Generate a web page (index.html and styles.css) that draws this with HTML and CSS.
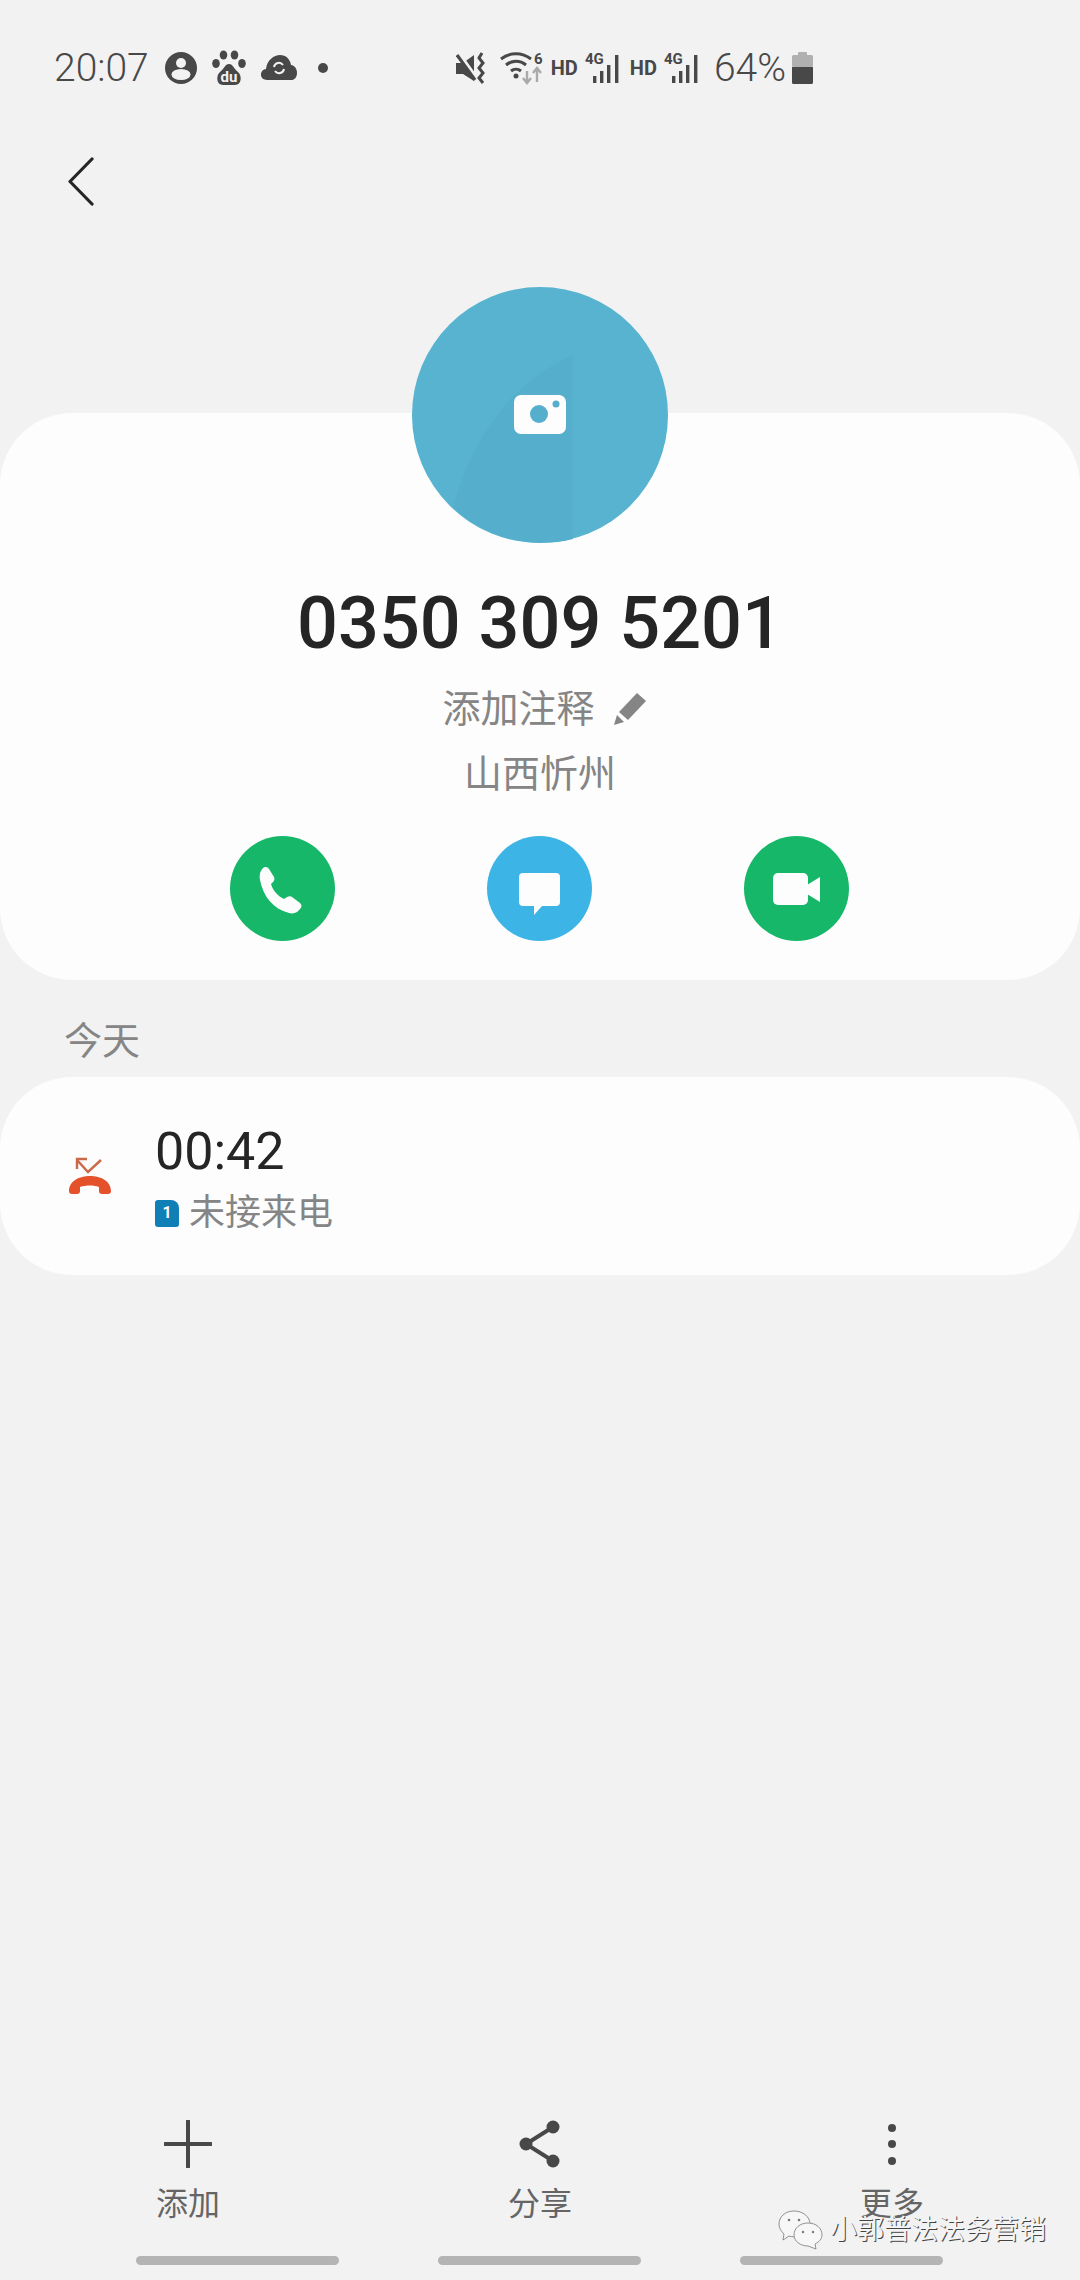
FILE: index.html
```html
<!DOCTYPE html>
<html lang="zh-CN">
<head>
    <meta charset="UTF-8">
    <meta name="viewport" content="width=device-width, initial-scale=1.0">
    <title>0350 309 5201</title>
    <link rel="stylesheet" href="styles.css">
</head>
<body>
    <div class="status-bar">
        <div class="status-left">
            <span class="status-text">20:07</span>
            <svg class="ic-user" width="32" height="32" viewBox="0 0 32 32"><circle cx="16" cy="16" r="16" fill="#484848"/><circle cx="16" cy="11" r="5" fill="#f2f2f2"/><ellipse cx="16" cy="22.500" rx="9.500" ry="5.500" fill="#f2f2f2"/></svg>
            <svg class="ic-baidu" width="36" height="36" viewBox="0 0 36 36"><g fill="#484848"><ellipse cx="11.500" cy="5" rx="3.800" ry="4.600"/><ellipse cx="22.500" cy="5" rx="3.800" ry="4.600"/><ellipse cx="4" cy="13.500" rx="3.800" ry="4.600"/><ellipse cx="30" cy="13.500" rx="3.800" ry="4.600"/><path d="M17 14c4 0 5 5 9 8 4 3 4 13-3 13H11C4 35 4 25 8 22c4-3 5-8 9-8z"/></g><text x="17" y="32" class="baidu-du">du</text></svg>
            <svg class="ic-cloud" width="36" height="26" viewBox="0 0 36 26"><path d="M6 25c-8 0-8-10-1-11C6 5 13 0 19 0c6 0 10 4 11 10 8 1 8 15 0 15z" fill="#484848"/><path d="M13 12a5 5 0 0 1 9-2M23 14a5 5 0 0 1-9 2" fill="none" stroke="#f2f2f2" stroke-width="2"/></svg>
            <span class="status-dot"></span>
        </div>
        <div class="status-right">
            <svg class="ic-mute" width="31" height="32" viewBox="0 0 31 32"><path d="M0 11h7l11-8v26L7 22H0z" fill="#484848"/><path d="M2 1l18 25" stroke="#f2f2f2" stroke-width="4.500"/><path d="M1 3l18 25" stroke="#484848" stroke-width="3.200"/><path d="M26 1l-3 5 4 5-4 5 4 5-4 5 4 5" fill="none" stroke="#484848" stroke-width="3"/></svg>
            <svg class="ic-wifi" width="43" height="32" viewBox="0 0 43 32"><g fill="none" stroke="#484848" stroke-width="3"><path d="M1 7c9-7 21-7 30 0"/><path d="M6 13c6-5 14-5 20 0"/><path d="M11 19c3-2.500 7-2.500 10 0"/></g><circle cx="16" cy="24" r="2.500" fill="#484848"/><text x="34" y="12" class="status-mini">6</text><path d="M27 19v11m-4-4l4 5 4-5" fill="none" stroke="#aaa" stroke-width="2.400"/><path d="M37 30V17m-4 4l4-5 4 5" fill="none" stroke="#aaa" stroke-width="2.400"/></svg>
            <span class="status-hd">HD</span>
            <svg class="ic-signal" width="37" height="32" viewBox="0 0 37 32"><text x="0" y="12" class="status-mini">4G</text><g fill="#484848"><rect x="8" y="24" width="3.400" height="7"/><rect x="15" y="19" width="3.400" height="12"/><rect x="22" y="13" width="3.400" height="18"/><rect x="30" y="3" width="3.400" height="28"/></g></svg>
            <span class="status-hd">HD</span>
            <svg class="ic-signal" width="37" height="32" viewBox="0 0 37 32"><text x="0" y="12" class="status-mini">4G</text><g fill="#484848"><rect x="8" y="24" width="3.400" height="7"/><rect x="15" y="19" width="3.400" height="12"/><rect x="22" y="13" width="3.400" height="18"/><rect x="30" y="3" width="3.400" height="28"/></g></svg>
            <span class="status-text status-pct">64%</span>
            <svg class="ic-battery" width="21" height="32" viewBox="0 0 21 32"><rect x="6" y="0" width="9" height="4" rx="1" fill="#b0b0b0"/><rect x="0" y="3" width="21" height="12" rx="1.500" fill="#b0b0b0"/><path d="M0 15h21v15.500a1.500 1.500 0 0 1-1.500 1.500h-18A1.500 1.500 0 0 1 0 30.500z" fill="#484848"/></svg>
        </div>
    </div>

    <div class="top-bar">
        <svg width="26" height="50" viewBox="0 0 26 50"><path d="M24 2L2 24.500 24 47" fill="none" stroke="#252525" stroke-width="3.200" stroke-linecap="round" stroke-linejoin="round"/></svg>
    </div>

    <div class="main">
        <div class="card contact-card">
            <svg class="avatar" width="256" height="256" viewBox="0 0 256 256">
                <circle cx="128" cy="128" r="128" fill="#57b3d0"/>
                <path d="M41 220C60 150 100 95 161 68V252A128 128 0 0 1 41 220z" fill="#55aecc"/>
                <rect x="102" y="108" width="52" height="39" rx="7" fill="#fdfdfd"/>
                <circle cx="127" cy="127" r="9" fill="#55aecc"/>
                <circle cx="144" cy="117" r="3.500" fill="#55aecc"/>
            </svg>
            <div class="number">0350 309 5201</div>
            <div class="memo">
                <span>添加注释</span>
                <svg width="32" height="32" viewBox="0 0 32 32"><path d="M23 0l9 8-18 19-9-8z" fill="#858585"/><path d="M3 22l7 7-10 3z" fill="#858585"/></svg>
            </div>
            <div class="place">山西忻州</div>
            <div class="actions">
                <div class="action green">
                    <svg width="105" height="105" viewBox="0 0 105 105"><path d="M33 32c2-2 5-1 6 1l5 8c1 2 0 4-1 5l-2 2c2 7 7 12 13 15l3-2c2-1 4-1 5 0l8 6c2 2 2 4 0 6l-3 3c-2 1-5 2-8 1C43 73 33 60 30 44c-1-5 0-9 3-12z" fill="#fdfdfd"/></svg>
                </div>
                <div class="action blue">
                    <svg width="105" height="105" viewBox="0 0 105 105"><path d="M36 37h33a4 4 0 0 1 4 4v25a4 4 0 0 1-4 4H55l-8 9v-9H36a4 4 0 0 1-4-4V41a4 4 0 0 1 4-4z" fill="#fdfdfd"/></svg>
                </div>
                <div class="action green">
                    <svg width="105" height="105" viewBox="0 0 105 105"><rect x="29" y="37" width="35" height="32" rx="5" fill="#fdfdfd"/><path d="M63 49l13-8v25l-13-8z" fill="#fdfdfd"/></svg>
                </div>
            </div>
        </div>

        <div class="section-label">今天</div>

        <div class="card call-card">
            <svg class="call-icon" width="44" height="42" viewBox="0 0 44 42"><path d="M33 5L20 17 9 5M19 4H9v10" fill="none" stroke="#c9694a" stroke-width="2.400"/><path d="M1 36C1 16 43 16 43 36c0 2-1 3-3 3h-6c-2 0-3-1-3-3v-4c-5-2-13-2-19 0v4c0 2-1 3-3 3H4c-2 0-3-1-3-3z" fill="#e4512a"/></svg>
            <div class="call-text">
                <div class="call-time">00:42</div>
                <div class="call-sub">
                    <span class="sim"><span>1</span></span>
                    <span>未接来电</span>
                </div>
            </div>
        </div>
    </div>

    <div class="bottom-nav">
        <div class="nav-item">
            <svg width="48" height="48" viewBox="0 0 48 48"><path d="M24 1v46M1 24h46" stroke="#484848" stroke-width="4" stroke-linecap="round"/></svg>
            <span>添加</span>
        </div>
        <div class="nav-item">
            <svg width="48" height="48" viewBox="0 0 48 48"><path d="M37 7L10 24l27 17" fill="none" stroke="#484848" stroke-width="4"/><circle cx="37" cy="7" r="6.500" fill="#484848"/><circle cx="10" cy="24" r="6.500" fill="#484848"/><circle cx="37" cy="41" r="6.500" fill="#484848"/></svg>
            <span>分享</span>
        </div>
        <div class="nav-item">
            <svg width="48" height="48" viewBox="0 0 48 48"><circle cx="24" cy="8" r="4" fill="#484848"/><circle cx="24" cy="24" r="4" fill="#484848"/><circle cx="24" cy="41" r="4" fill="#484848"/></svg>
            <span>更多</span>
        </div>
    </div>

    <div class="home-bars">
        <span></span>
        <span></span>
        <span></span>
    </div>

    <div class="watermark">
        <svg width="46" height="40" viewBox="0 0 46 40"><g fill="#f7f7f7" stroke="#777" stroke-width="0.800"><path d="M16 1C7 1 1 7 1 14c0 4 2 7 5 10l-1 6 6-4c3 1 6 1 9 0 7 0 12-6 12-12C32 7 25 1 16 1z"/><path d="M30 13c-8 0-14 5-14 12 0 6 6 11 14 11l8 3-1-5c4-2 7-5 7-9 0-7-6-12-14-12z"/></g><g fill="#777"><circle cx="11" cy="10" r="1.300"/><circle cx="21" cy="10" r="1.300"/><circle cx="25" cy="22" r="1.200"/><circle cx="35" cy="22" r="1.200"/></g></svg>
        <span>小郭普法法务营销</span>
    </div>
</body>
</html>
```

FILE: styles.css
```css
* { box-sizing: border-box; }

body {
    margin: 0;
    width: 1080px;
    height: 2280px;
    position: relative;
    overflow: hidden;
    background: #f2f2f2;
    display: flex;
    flex-direction: column;
    font-family: Roboto, "Noto Sans CJK SC", sans-serif;
    color: #252525;
}

/* status bar */
.status-bar {
    height: 100px;
    padding: 44px 267px 0 54px;
    display: flex;
    justify-content: space-between;
    align-items: flex-start;
    color: #484848;
}
.status-left, .status-right {
    display: flex;
    align-items: center;
    height: 48px;
}
.status-text {
    font-size: 39px;
    font-weight: 300;
    line-height: 48px;
    color: #484848;
}
.ic-user { margin-left: 16px; }
.ic-baidu { margin-left: 15px; }
.ic-cloud { margin-left: 13px; }
.status-dot {
    width: 10px;
    height: 10px;
    margin-left: 21px;
    border-radius: 50%;
    background: #484848;
}
.baidu-du {
    font: 700 15px Roboto, sans-serif;
    fill: #f2f2f2;
    text-anchor: middle;
}
.status-mini {
    font: 700 15px Roboto, sans-serif;
    fill: #484848;
}
.status-hd {
    font-size: 20px;
    font-weight: 700;
    color: #484848;
}
.ic-wifi { margin-left: 13px; overflow: visible; }
.status-right .status-hd { margin-left: 8px; }
.ic-signal { margin-left: 7px; overflow: visible; }
.status-pct { margin-left: 13px; }
.ic-battery { margin-left: 6px; }

/* back arrow row */
.top-bar {
    height: 313px;
    padding: 57px 0 0 68px;
}

/* cards */
.main { flex: 1; }
.card {
    background: #fdfdfd;
    border-radius: 72px;
}
.contact-card {
    height: 567px;
    display: flex;
    flex-direction: column;
    align-items: center;
}
.avatar {
    margin-top: -126px;
    flex: none;
}
.number {
    margin-top: 41px;
    font-size: 72px;
    font-weight: 500;
    line-height: 80px;
    color: #252525;
}
.memo {
    margin-top: 18px;
    margin-left: 8px;
    display: flex;
    align-items: center;
    gap: 19px;
    font-size: 38px;
    line-height: 54px;
    color: #858585;
}
.place {
    margin-top: 11px;
    font-size: 38px;
    line-height: 54px;
    color: #858585;
}
.actions {
    margin-top: 35px;
    margin-left: -1px;
    display: flex;
    gap: 152px;
}
.action {
    width: 105px;
    height: 105px;
    border-radius: 50%;
}
.action svg { display: block; }
.green { background: #16b769; }
.blue { background: #3cb4e6; }

.section-label {
    padding: 34px 0 0 64px;
    height: 97px;
    font-size: 38px;
    line-height: 54px;
    color: #858585;
}

.call-card {
    height: 198px;
    display: flex;
    align-items: center;
    padding-left: 68px;
}
.call-icon { flex: none; }
.call-text {
    margin-left: 43px;
    padding-top: 8px;
}
.call-time {
    font-size: 52px;
    line-height: 60px;
    color: #252525;
}
.call-sub {
    margin-top: 6px;
    display: flex;
    align-items: center;
    gap: 10px;
    font-size: 36px;
    line-height: 50px;
    color: #858585;
}
.sim {
    width: 24px;
    height: 27px;
    border-radius: 3px 8px 3px 3px;
    background: #0f7fb5;
    color: #fdfdfd;
    font-size: 16px;
    font-weight: 700;
    display: flex;
    align-items: center;
    justify-content: center;
}

/* bottom */
.bottom-nav {
    height: 136px;
    padding: 0 68px;
    display: grid;
    grid-template-columns: 240px 1fr 240px;
}
.nav-item {
    display: flex;
    flex-direction: column;
    align-items: center;
    font-size: 32px;
    line-height: 44px;
    color: #656565;
}
.nav-item svg { margin-bottom: 14px; }
.home-bars {
    height: 24px;
    padding-left: 136px;
    display: flex;
    gap: 99px;
}
.home-bars span {
    width: 203px;
    height: 9px;
    border-radius: 5px;
    background: #b4b4b4;
}

/* wechat mark laid over the screenshot */
.watermark {
    position: absolute;
    left: 778px;
    top: 2210px;
    display: flex;
    align-items: center;
    gap: 6px;
    font-size: 27px;
    line-height: 40px;
    color: #f4f4f4;
    text-shadow: 1px 1px 0 #444;
}
```
